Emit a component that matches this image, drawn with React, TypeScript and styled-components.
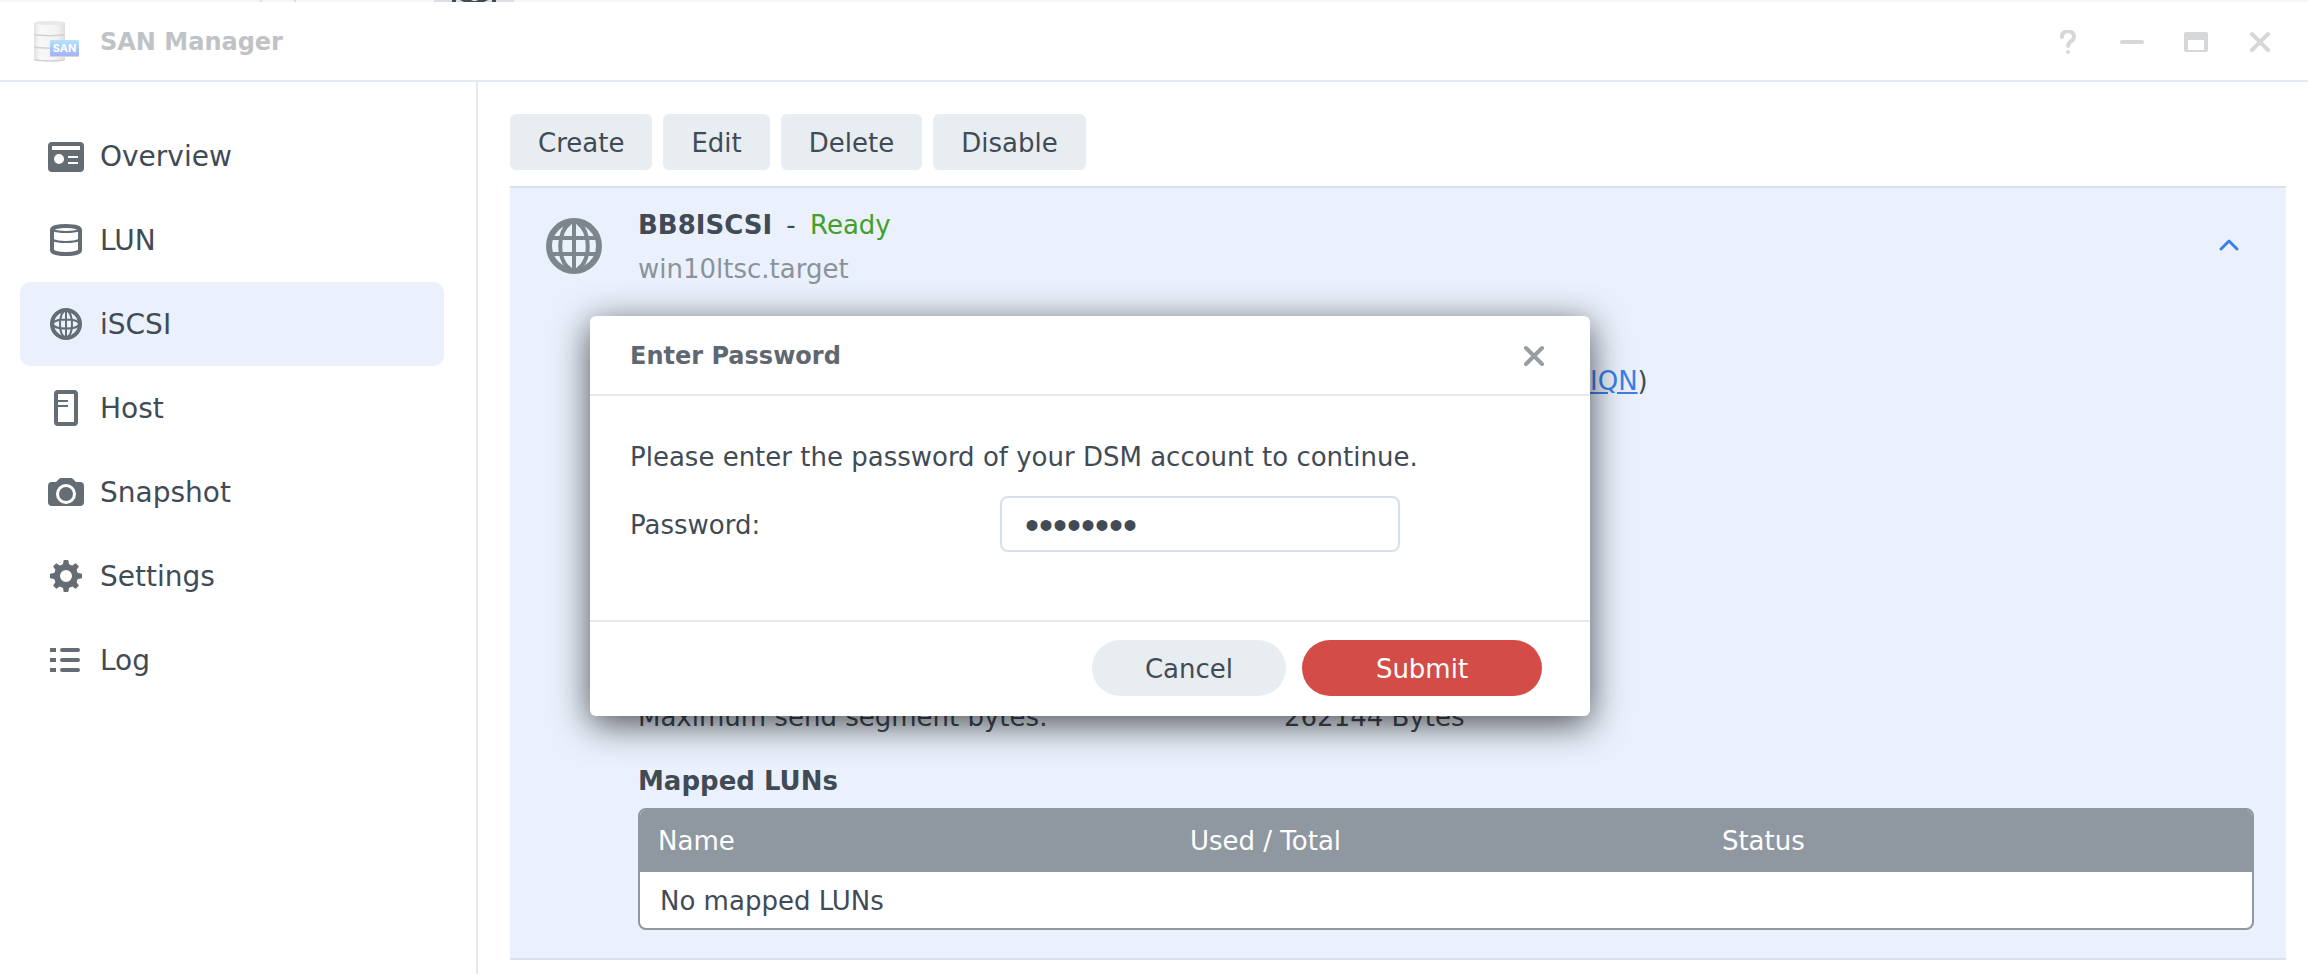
import React from "react";
import styled, { createGlobalStyle } from "styled-components";

const color = {
  text: "#414b55",
  icon: "#646c74",
  muted: "#8a939c",
  line: "#e4e9ef",
  panelLine: "#d8e1ec",
  tint: "#eaf1fc",
  button: "#e8edf1",
  tableHead: "#8f97a0",
  link: "#3a80e8",
};

const GlobalStyle = createGlobalStyle`
  * { box-sizing: border-box; }
  body {
    margin: 0;
    background: #ffffff;
    color: ${color.text};
    font-family: Verdana, "DejaVu Sans", sans-serif;
    font-size: 26px;
  }
  button, input { font-family: inherit; font-size: inherit; color: inherit; }
  svg { display: block; flex: none; }
`;

const Page = styled.div`
  position: relative;
  display: flex;
  flex-direction: column;
  min-height: 100vh;
  overflow: hidden;
`;

const BackdropStrip = styled.div`
  display: flex;
  height: 2px;
  background: #f5f5f5;
`;

const TitleBar = styled.header`
  display: flex;
  align-items: center;
  height: 80px;
  padding: 0 36px 0 34px;
  border-bottom: 2px solid ${color.line};
`;

const AppTitle = styled.h1`
  flex: 1;
  margin: 0 0 0 18px;
  padding-top: 2px;
  font-size: 24px;
  line-height: 32px;
  color: #c0c3c6;
`;

const WindowControls = styled.div`
  display: flex;
  gap: 40px;
  padding-top: 2px;
`;

const IconButton = styled.button<{ $tone: string }>`
  display: flex;
  padding: 0;
  border: 0;
  background: none;
  color: ${(p) => p.$tone};
`;

const Body = styled.div`
  display: flex;
  flex: 1;
`;

const Sidebar = styled.nav`
  flex: none;
  width: 478px;
  padding: 32px 32px 0 20px;
  border-right: 2px solid ${color.line};
`;

const MenuItem = styled.a<{ $active?: boolean }>`
  display: flex;
  align-items: center;
  gap: 16px;
  height: 84px;
  padding: 0 28px;
  border-radius: 10px;
  background: ${(p) => (p.$active ? color.tint : "transparent")};
  color: ${color.text};
  font-size: 28px;
  line-height: 36px;
  text-decoration: none;
  svg { color: ${color.icon}; }
`;

const MenuLabel = styled.span`
  padding-top: 2px;
`;

const Content = styled.main`
  flex: 1;
  min-width: 0;
  padding: 32px 22px 14px 32px;
`;

const Toolbar = styled.div`
  display: flex;
  gap: 11px;
  margin-bottom: 16px;
`;

const ToolButton = styled.button`
  height: 56px;
  padding: 2px 28px 0;
  border: 0;
  border-radius: 6px;
  background: ${color.button};
`;

const TargetPanel = styled.section`
  padding: 13px 32px 28px 36px;
  border: solid ${color.panelLine};
  border-width: 2px 0;
  background: ${color.tint};
`;

const TargetHeader = styled.div`
  display: flex;
  align-items: center;
  gap: 36px;
  padding-right: 13px;
`;

const TargetHeading = styled.div`
  flex: 1;
  padding-top: 2px;
  line-height: 44px;
`;

const TargetName = styled.h2`
  margin: 0;
  font-size: 26px;
  font-weight: 400;
`;

const Dash = styled.span`
  margin: 0 6px;
`;

const Ready = styled.span`
  color: #43a02a;
`;

const TargetId = styled.div`
  color: ${color.muted};
`;

const TargetDetails = styled.div`
  margin-left: 92px;
`;

const Properties = styled.dl`
  display: grid;
  grid-template-columns: 646px 1fr;
  row-gap: 288px;
  margin: 66px 0 18px;
  line-height: 48px;
`;

const Term = styled.dt`
  grid-column: 1;
`;

const Value = styled.dd<{ $indent?: number }>`
  grid-column: 2;
  margin: 0 0 0 ${(p) => p.$indent ?? 0}px;
`;

const Link = styled.a`
  color: ${color.link};
  text-decoration: underline;
`;

const SectionTitle = styled.h3`
  margin: 0 0 5px;
  font-size: 26px;
  line-height: 44px;
`;

const LunTable = styled.table`
  width: 100%;
  table-layout: fixed;
  border-collapse: separate;
  border-spacing: 0;
  border: 2px solid ${color.tableHead};
  border-radius: 8px;
  overflow: hidden;
  background: #ffffff;
  text-align: left;

  th {
    width: 33%;
    height: 62px;
    padding: 0 18px;
    background: ${color.tableHead};
    color: #ffffff;
    font-weight: 400;
  }
  th:last-child {
    width: auto;
  }
  td {
    height: 56px;
    padding: 2px 20px 0;
  }
`;

const DialogLayer = styled.div`
  position: absolute;
  inset: 0;
  display: flex;
  align-items: flex-start;
  padding: 316px 0 0 590px;
`;

const Dialog = styled.form`
  width: 1000px;
  border-radius: 6px;
  background: #ffffff;
  box-shadow: 0 8px 36px rgba(0, 0, 0, 0.68);
`;

const DialogHeader = styled.div`
  display: flex;
  align-items: center;
  justify-content: space-between;
  height: 80px;
  padding: 2px 44px 0 40px;
  border-bottom: 2px solid ${color.line};
`;

const DialogTitle = styled.h2`
  margin: 0;
  font-size: 24px;
  line-height: 32px;
  color: #5f6871;
`;

const DialogBody = styled.div`
  padding: 43px 40px 68px;
`;

const Message = styled.p`
  margin: 0 0 21px;
  line-height: 36px;
`;

const Field = styled.div`
  display: flex;
  align-items: center;
`;

const FieldLabel = styled.label`
  width: 370px;
  padding-top: 2px;
`;

const PasswordInput = styled.input`
  width: 400px;
  height: 56px;
  padding: 2px 23px 0;
  border: 2px solid #d6e0ea;
  border-radius: 8px;
  background: #ffffff;
  font-family: "Liberation Sans", Arial, sans-serif;
  font-size: 40px;
  outline: none;
`;

const DialogFooter = styled.div`
  display: flex;
  justify-content: flex-end;
  gap: 16px;
  padding: 18px 48px 20px;
  border-top: 2px solid ${color.line};
`;

const PillButton = styled.button<{ $primary?: boolean }>`
  width: ${(p) => (p.$primary ? 240 : 194)}px;
  height: 56px;
  padding: 2px 0 0;
  border: 0;
  border-radius: 28px;
  background: ${(p) => (p.$primary ? "#d44c47" : color.button)};
  color: ${(p) => (p.$primary ? "#ffffff" : color.text)};
`;

const Svg = ({ size = 36, children }: { size?: number; children: React.ReactNode }) => (
  <svg width={size} height={size} viewBox={`0 0 ${size} ${size}`} fill="none" aria-hidden="true">
    {children}
  </svg>
);

const OverviewIcon = () => (
  <Svg>
    <path
      fill="currentColor"
      fillRule="evenodd"
      d="M4 4h28a4 4 0 0 1 4 4v22a4 4 0 0 1-4 4H4a4 4 0 0 1-4-4V8a4 4 0 0 1 4-4zM4 8v4h28V8zM11 16a5 5 0 1 0 0 10a5 5 0 1 0 0-10zM20 18v2h10v-2zM20 24v2h10v-2z"
    />
  </Svg>
);

const LunIcon = () => (
  <Svg>
    <path stroke="currentColor" strokeWidth="4" d="M4 8c0-2.6 6-4 14-4s14 1.400 14 4v20c0 2.600-6 4-14 4s-14-1.400-14-4z" />
    <path stroke="currentColor" strokeWidth="2" d="M5 8c3 1.500 8 2 13 2s10-.5 13-2M5 18c3 1.500 8 2 13 2s10-.5 13-2" />
  </Svg>
);

const GlobeIcon = () => (
  <Svg>
    <circle cx="18" cy="18" r="14" stroke="currentColor" strokeWidth="4" />
    <path
      stroke="currentColor"
      strokeWidth="2"
      d="M18 4v28M5 18c0-6 26-6 26 0M5 18c0 6 26 6 26 0M18 4c-8 3-8 25 0 28M18 4c8 3 8 25 0 28"
    />
  </Svg>
);

const HostIcon = () => (
  <Svg>
    <rect x="8" y="2" width="20" height="32" rx="2" stroke="currentColor" strokeWidth="4" />
    <path stroke="currentColor" strokeWidth="2" d="M10 11h10M10 16h10" />
  </Svg>
);

const SnapshotIcon = () => (
  <Svg>
    <path
      fill="currentColor"
      fillRule="evenodd"
      d="M4 8h4l3-3a3 3 0 0 1 2-1h10a3 3 0 0 1 2 1l3 3h4a4 4 0 0 1 4 4v16a4 4 0 0 1-4 4H4a4 4 0 0 1-4-4V12a4 4 0 0 1 4-4zM18 10a10 10 0 1 0 0 20a10 10 0 1 0 0-20z"
    />
    <circle cx="18" cy="20" r="7" fill="currentColor" />
  </Svg>
);

const SettingsIcon = () => (
  <Svg>
    <circle cx="18" cy="18" r="9" stroke="currentColor" strokeWidth="6" />
    {[0, 45, 90, 135, 180, 225, 270, 315].map((angle) => (
      <path
        key={angle}
        fill="currentColor"
        transform={`rotate(${angle} 18 18)`}
        d="M13.500 8l1.500-2 .5-3a1 1 0 0 1 1-1h3a1 1 0 0 1 1 1l.5 3 1.500 2z"
      />
    ))}
  </Svg>
);

const LogIcon = () => (
  <Svg>
    <path fill="currentColor" d="M2 6h6v4H2zM2 16h6v4H2zM2 26h6v4H2z" />
    <path stroke="currentColor" strokeWidth="4" strokeLinecap="round" d="M14 8h16M14 18h16M14 28h16" />
  </Svg>
);

const TargetIcon = () => (
  <Svg size={56}>
    <g stroke="#7d858d" strokeWidth="4">
      <circle cx="28" cy="28" r="25" strokeWidth="6" />
      <path d="M28 4v48M5 20h46M5 36h46M24 5c-13 9-13 37 0 46M32 5c13 9 13 37 0 46" />
    </g>
  </Svg>
);

const CloseIcon = () => (
  <Svg size={24}>
    <path stroke="currentColor" strokeWidth="4" strokeLinecap="round" d="M4 4l16 16M20 4L4 20" />
  </Svg>
);

const SanLogo = () => (
  <svg width="48" height="44" viewBox="0 0 48 44" aria-hidden="true">
    <defs>
      <linearGradient id="disk" x1="0" x2="1" y1="0" y2="0">
        <stop offset="0" stopColor="#e3e3e3" />
        <stop offset="0.2" stopColor="#f8f8f8" />
        <stop offset="0.75" stopColor="#f2f2f2" />
        <stop offset="1" stopColor="#dedede" />
      </linearGradient>
      <linearGradient id="badge" x1="0" x2="0" y1="0" y2="1">
        <stop offset="0" stopColor="#b5e3ff" />
        <stop offset="0.6" stopColor="#a9c2fb" />
        <stop offset="1" stopColor="#a6b3f8" />
      </linearGradient>
    </defs>
    <path fill="url(#disk)" d="M0 4c0-3 31-3 31 0v36c0 3-31 3-31 0z" />
    <ellipse cx="15.500" cy="4" rx="14.500" ry="2" fill="#e8e8e8" />
    <g fill="none" stroke="#d2d2d2" strokeWidth="1.500">
      <path d="M0 15.500c5 1.500 26 1.500 31 0" />
      <path d="M0 28c5 1.500 26 1.500 31 0" />
      <path d="M0 40.500c5 2 26 2 31 0" />
    </g>
    <rect x="16" y="22" width="29" height="16" rx="1" fill="#d4d4dc" />
    <rect x="16" y="21" width="29" height="16" rx="1" fill="url(#badge)" />
    <text x="30.500" y="33" textAnchor="middle" fontFamily="Inter, sans-serif" fontSize="11" fontWeight="700" fill="#ffffff">
      SAN
    </text>
  </svg>
);

const menu = [
  { label: "Overview", Icon: OverviewIcon },
  { label: "LUN", Icon: LunIcon },
  { label: "iSCSI", Icon: GlobeIcon, active: true },
  { label: "Host", Icon: HostIcon },
  { label: "Snapshot", Icon: SnapshotIcon },
  { label: "Settings", Icon: SettingsIcon },
  { label: "Log", Icon: LogIcon },
];

export default function App() {
  return (
    <Page>
      <GlobalStyle />
      <BackdropStrip>
        <svg width="520" height="2" viewBox="0 0 520 2" aria-hidden="true">
          <path fill="#dcdfe3" d="M260 0h2v2h-2zM294 0h2v2h-2zM434 0h80v2h-80z" />
          <path fill="#414b55" d="M452 0h4v2h-4zM460 0h11l2 1h3l2-1h10l-4 2h-20zM492 0h4v2h-4z" />
        </svg>
      </BackdropStrip>

      <TitleBar>
        <SanLogo />
        <AppTitle>SAN Manager</AppTitle>
        <WindowControls>
          <IconButton type="button" $tone="#d5d7d9" aria-label="Help">
            <Svg size={24}>
              <path stroke="currentColor" strokeWidth="4" strokeLinecap="round" d="M6 7a6 5.500 0 1 1 10 3.500c-2.500 2-4 3-4 5.500" />
              <circle cx="12" cy="22" r="2" fill="currentColor" />
            </Svg>
          </IconButton>
          <IconButton type="button" $tone="#d5d7d9" aria-label="Minimize">
            <Svg size={24}>
              <path stroke="currentColor" strokeWidth="4" strokeLinecap="round" d="M2 12h20" />
            </Svg>
          </IconButton>
          <IconButton type="button" $tone="#d5d7d9" aria-label="Maximize">
            <Svg size={24}>
              <path
                fill="currentColor"
                fillRule="evenodd"
                d="M2 2h20a2 2 0 0 1 2 2v16a2 2 0 0 1-2 2H2a2 2 0 0 1-2-2V4a2 2 0 0 1 2-2zM4 10v10h16V10z"
              />
            </Svg>
          </IconButton>
          <IconButton type="button" $tone="#d5d7d9" aria-label="Close window">
            <CloseIcon />
          </IconButton>
        </WindowControls>
      </TitleBar>

      <Body>
        <Sidebar>
          {menu.map(({ label, Icon, active }) => (
            <MenuItem key={label} href="#" $active={active}>
              <Icon />
              <MenuLabel>{label}</MenuLabel>
            </MenuItem>
          ))}
        </Sidebar>

        <Content>
          <Toolbar>
            <ToolButton type="button">Create</ToolButton>
            <ToolButton type="button">Edit</ToolButton>
            <ToolButton type="button">Delete</ToolButton>
            <ToolButton type="button">Disable</ToolButton>
          </Toolbar>

          <TargetPanel>
            <TargetHeader>
              <TargetIcon />
              <TargetHeading>
                <TargetName>
                  <b>BB8ISCSI</b> <Dash>-</Dash> <Ready>Ready</Ready>
                </TargetName>
                <TargetId>win10ltsc.target</TargetId>
              </TargetHeading>
              <IconButton type="button" $tone={color.link} aria-label="Collapse">
                <Svg size={24}>
                  <path stroke="currentColor" strokeWidth="3" strokeLinecap="round" strokeLinejoin="round" d="M4 15l8-8 8 8" />
                </Svg>
              </IconButton>
            </TargetHeader>

            <TargetDetails>
              <Properties>
                <Value $indent={306}>
                  <Link href="#">IQN</Link>)
                </Value>
                <Term>Maximum send segment bytes:</Term>
                <Value>262144 Bytes</Value>
              </Properties>

              <SectionTitle>Mapped LUNs</SectionTitle>
              <LunTable>
                <thead>
                  <tr>
                    <th>Name</th>
                    <th>Used / Total</th>
                    <th>Status</th>
                  </tr>
                </thead>
                <tbody>
                  <tr>
                    <td colSpan={3}>No mapped LUNs</td>
                  </tr>
                </tbody>
              </LunTable>
            </TargetDetails>
          </TargetPanel>
        </Content>
      </Body>

      <DialogLayer>
        <Dialog role="dialog" aria-labelledby="dialog-title" onSubmit={(e) => e.preventDefault()}>
          <DialogHeader>
            <DialogTitle id="dialog-title">Enter Password</DialogTitle>
            <IconButton type="button" $tone="#989da2" aria-label="Close">
              <CloseIcon />
            </IconButton>
          </DialogHeader>
          <DialogBody>
            <Message>Please enter the password of your DSM account to continue.</Message>
            <Field>
              <FieldLabel htmlFor="password">Password:</FieldLabel>
              <PasswordInput id="password" type="password" defaultValue="abcdefgh" />
            </Field>
          </DialogBody>
          <DialogFooter>
            <PillButton type="button">Cancel</PillButton>
            <PillButton type="submit" $primary>
              Submit
            </PillButton>
          </DialogFooter>
        </Dialog>
      </DialogLayer>
    </Page>
  );
}
